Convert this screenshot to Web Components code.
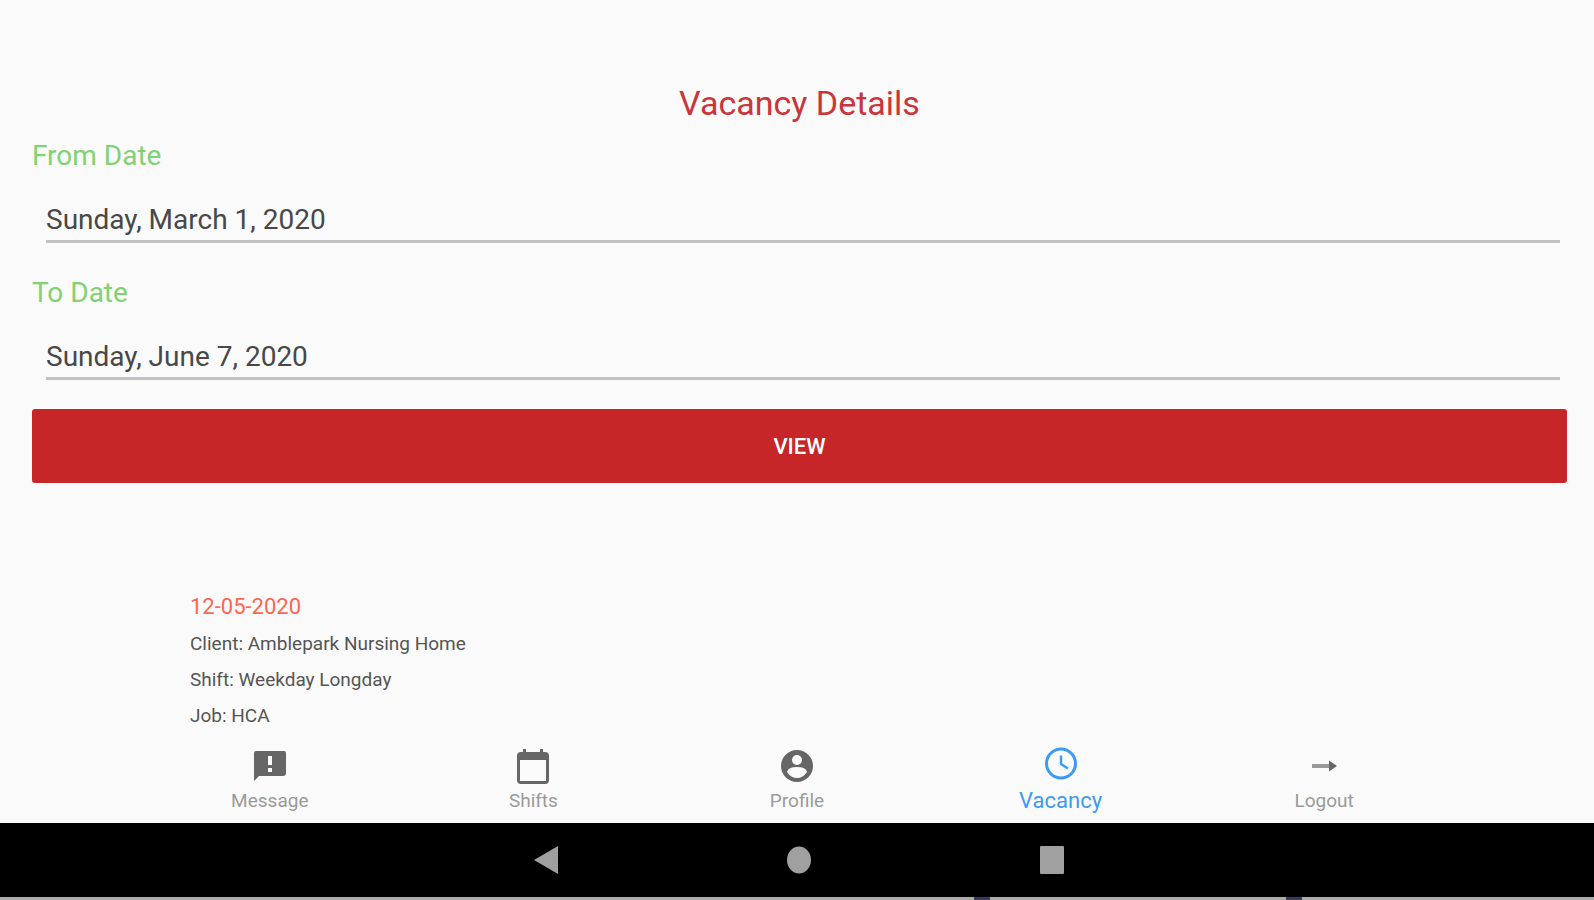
<!DOCTYPE html>
<html lang="en">
<head>
<meta charset="utf-8">
<meta name="viewport" content="width=device-width, initial-scale=1">
<title>Vacancy Details</title>
<style>
  html, body { margin: 0; height: 100%; }
  body { background: #fafafa; font-family: Roboto, "Liberation Sans", sans-serif; }
</style>
</head>
<body>
<vacancy-app></vacancy-app>

<script>
class DateField extends HTMLElement {
    constructor() {
        super();
        this._root = this.attachShadow({mode: 'open'});
        this._root.innerHTML = `
          <style>
            :host { display: block; }
            label {
                display: block;
                color: #80d272;
                font-size: 28px;
                line-height: 36px;
            }
            .box { padding: 24px 7px 0 14px; }
            input {
                display: block;
                box-sizing: border-box;
                width: 100%;
                height: 45px;
                padding: 1px 0 0;
                border: 0;
                border-bottom: 3px solid #c2c2c2;
                background: none;
                color: #484848;
                font: inherit;
                font-size: 28px;
                outline: none;
            }
          </style>
          <label for="date"><slot></slot></label>
          <div class="box"><input id="date" type="text"></div>
        `;
        this._root.querySelector('input').value = this.getAttribute('value') || '';
    }
}

class ViewButton extends HTMLElement {
    constructor() {
        super();
        this._root = this.attachShadow({mode: 'open'});
        this._root.innerHTML = `
          <style>
            :host { display: block; }
            button {
                display: block;
                width: 100%;
                height: 74px;
                border: 0;
                border-radius: 3px;
                background: #c62628;
                color: #fff;
                font: inherit;
                font-size: 22px;
                font-weight: 500;
            }
          </style>
          <button type="button"><slot></slot></button>
        `;
    }
}

class VacancyCard extends HTMLElement {
    constructor() {
        super();
        this._root = this.attachShadow({mode: 'open'});
        this._root.innerHTML = `
          <style>
            :host { display: block; color: #555; font-size: 19px; line-height: 36px; }
            .date { color: #ff6550; font-size: 22px; line-height: 38px; }
          </style>
          <div class="date"><slot name="date"></slot></div>
          <div><slot name="client"></slot></div>
          <div><slot name="shift"></slot></div>
          <div><slot name="job"></slot></div>
        `;
    }
}

class TabItem extends HTMLElement {
    constructor() {
        super();
        this._root = this.attachShadow({mode: 'open'});
        this._root.innerHTML = `
          <style>
            :host { display: block; flex: 1; color: #9a9a9a; font-size: 19px; }
            :host([active]) { color: #3c9bf0; font-size: 22px; }
            a {
                display: flex;
                flex-direction: column;
                align-items: center;
                color: inherit;
                text-decoration: none;
                line-height: 30px;
            }
            .icon { display: flex; height: 40px; color: #666; }
            :host([active]) .icon { color: #3c9bf0; }
          </style>
          <a href="#"><span class="icon"><slot name="icon"></slot></span><slot></slot></a>
        `;
    }
}

class SystemBar extends HTMLElement {
    constructor() {
        super();
        this._root = this.attachShadow({mode: 'open'});
        this._root.innerHTML = `
          <style>
            :host { display: block; background: #000; }
            .keys {
                display: flex;
                justify-content: center;
                align-items: center;
                gap: 229px;
                height: 74px;
                padding-left: 4px;
                box-sizing: border-box;
            }
            button { display: block; padding: 0; border: 0; background: none; }
            svg { display: block; fill: #a0a0a0; }
            .edge {
                height: 3px;
                background: linear-gradient(to right, #aaa 61.1%, #39395c 61.1% 62.1%, #aaa 62.1% 80.7%, #39395c 80.7% 81.7%, #aaa 81.7%);
            }
          </style>
          <div class="keys">
            <button type="button" aria-label="Back">
              <svg width="24" height="28"><path d="M24 0v28L0 14z"/></svg>
            </button>
            <button type="button" aria-label="Home">
              <svg width="24" height="28"><ellipse cx="12" cy="14" rx="12" ry="13.5"/></svg>
            </button>
            <button type="button" aria-label="Recent apps">
              <svg width="24" height="28"><rect width="24" height="28" rx="1"/></svg>
            </button>
          </div>
          <div class="edge"></div>
        `;
    }
}

class VacancyApp extends HTMLElement {
    constructor() {
        super();
        this._root = this.attachShadow({mode: 'open'});
        this._root.innerHTML = `
          <style>
            :host { display: flex; flex-direction: column; height: 100vh; }
            main { flex: 1; min-height: 0; overflow: hidden; padding: 83px 27px 0 32px; }
            h1 {
                margin: 0;
                color: #c8353b;
                font-size: 34px;
                font-weight: 400;
                line-height: 40px;
                text-align: center;
                padding-bottom: 15px;
            }
            .fields { display: flex; flex-direction: column; gap: 32px; padding-bottom: 29px; }
            .list { padding: 105px 158px 0; }
            nav { display: flex; height: 77px; padding: 0 138px; }
            svg { display: block; }
          </style>
          <main>
            <h1>Vacancy Details</h1>
            <div class="fields">
              <date-field value="Sunday, March 1, 2020">From Date</date-field>
              <date-field value="Sunday, June 7, 2020">To Date</date-field>
            </div>
            <view-button>VIEW</view-button>
            <div class="list">
              <vacancy-card>
                <span slot="date">12-05-2020</span>
                <span slot="client">Client: Amblepark Nursing Home</span>
                <span slot="shift">Shift: Weekday Longday</span>
                <span slot="job">Job: HCA</span>
              </vacancy-card>
            </div>
          </main>
          <nav>
            <tab-item>
              <svg slot="icon" width="32" height="40" fill="currentColor">
                <path fill-rule="evenodd" d="M2 5H30Q32 5 32 7V27Q32 30 29 30H5L0 35V7Q0 5 2 5zM14 10V19H18V10zM14 22V26H18V22z"/>
              </svg>
              Message
            </tab-item>
            <tab-item>
              <svg slot="icon" width="32" height="40" fill="currentColor">
                <path fill-rule="evenodd" d="M6 3H9V6H23V3H26V6H28Q32 6 32 10V34Q32 38 28 38H4Q0 38 0 34V10Q0 6 4 6H6zM3 14V35H29V14z"/>
              </svg>
              Shifts
            </tab-item>
            <tab-item>
              <svg slot="icon" width="32" height="40">
                <circle cx="16" cy="20" r="16" fill="#666"/>
                <circle cx="16" cy="14" r="5" fill="#fafafa"/>
                <path d="M6 26Q7 21 16 21T26 26Q22 32 16 32T6 26z" fill="#fafafa"/>
              </svg>
              Profile
            </tab-item>
            <tab-item active>
              <svg slot="icon" width="32" height="40" fill="none" stroke="currentColor" stroke-width="3">
                <circle cx="16" cy="17.5" r="14.5"/>
                <path stroke-width="2.4" d="M16 9.500V18L23 22.500"/>
              </svg>
              Vacancy
            </tab-item>
            <tab-item>
              <svg slot="icon" width="26" height="40">
                <path d="M1 18H19V22H1z" fill="#999"/>
                <path d="M18 14.500L26 20L18 25.500z" fill="#666"/>
              </svg>
              Logout
            </tab-item>
          </nav>
          <system-bar></system-bar>
        `;
    }
}

window.customElements.define('date-field', DateField);
window.customElements.define('view-button', ViewButton);
window.customElements.define('vacancy-card', VacancyCard);
window.customElements.define('tab-item', TabItem);
window.customElements.define('system-bar', SystemBar);
window.customElements.define('vacancy-app', VacancyApp);
</script>
</body>
</html>
